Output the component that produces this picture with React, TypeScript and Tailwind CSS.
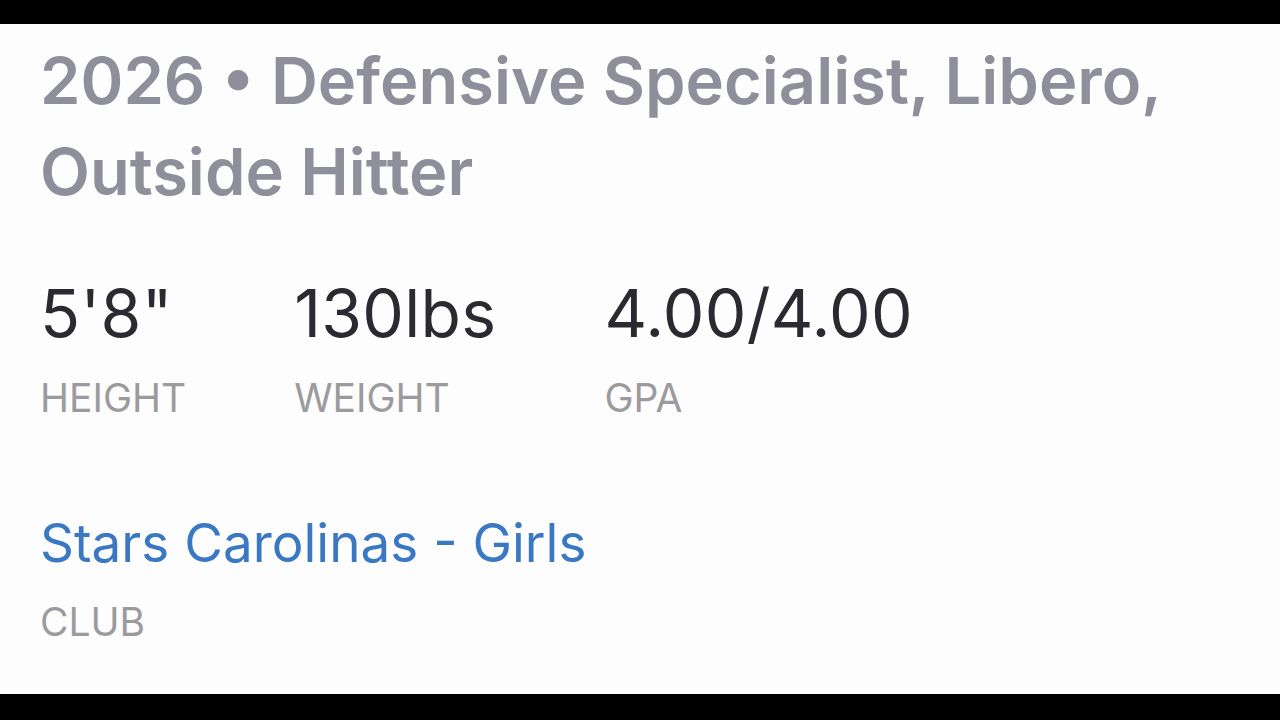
const stats = [
    { value: "5'8\"", label: "HEIGHT" },
    { value: "130lbs", label: "WEIGHT" },
    { value: "4.00/4.00", label: "GPA" },
]

const App = () => {
    return (
        <div className="w-[1280px] h-[720px] flex flex-col bg-black font-['Inter',sans-serif]">
            <div className="h-6 shrink-0" />
            <main className="flex-1 bg-[#fdfdfd] px-10 pt-[11px]">
                <h1 className="text-[65px] leading-[91px] font-semibold text-[#8f8f9b]">
                    2026 • Defensive Specialist, Libero,<br />Outside Hitter
                </h1>
                <div className="flex gap-[108px] mt-[63px]">
                    {stats.map((s) => (
                        <div key={s.label} className="flex flex-col">
                            <span className="text-[66px] leading-[66px] tracking-[0.3px] text-[#2a2a30]">{s.value}</span>
                            <span className="text-[39px] leading-[39px] mt-[32px] text-[#9b9b9d]">{s.label}</span>
                        </div>
                    ))}
                </div>
                <div className="flex flex-col mt-[100px]">
                    <a href="#" className="text-[53px] leading-[53px] text-[#3a78c3]">Stars Carolinas - Girls</a>
                    <span className="text-[39px] leading-[39px] mt-[32px] text-[#9b9b9d]">CLUB</span>
                </div>
            </main>
            <div className="h-[26px] shrink-0" />
        </div>
    )
}

export default App
